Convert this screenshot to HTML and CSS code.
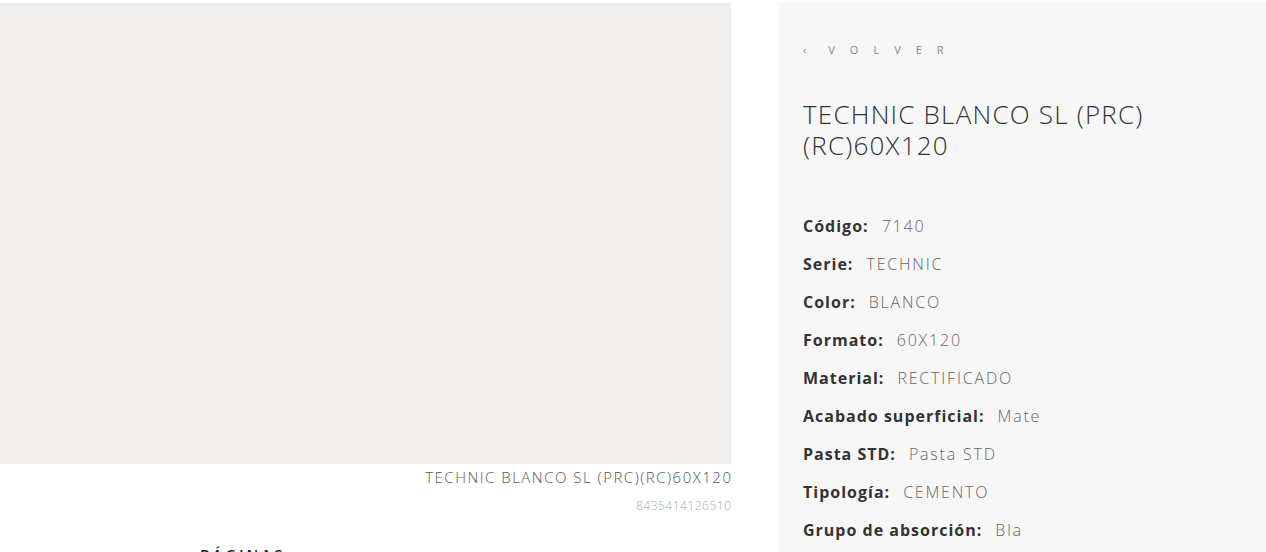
FILE: index.html
```html
<!DOCTYPE html>
<html lang="es">
<head>
<meta charset="utf-8">
<title>TECHNIC BLANCO SL (PRC)(RC)60X120</title>
<link rel="stylesheet" href="styles.css">
</head>
<body>
<main class="product">
  <section class="media">
    <div class="photo"></div>
    <div class="caption">
      <p class="caption-name">TECHNIC BLANCO SL (PRC)(RC)60X120</p>
      <p class="caption-ean">8435414126510</p>
    </div>
    <h2 class="pages">PÁGINAS</h2>
  </section>
  <aside class="info">
    <a class="back" href="#"><span class="back-arrow">‹</span>VOLVER</a>
    <h1 class="title">TECHNIC BLANCO SL (PRC)(RC)60X120</h1>
    <ul class="specs">
      <li><b>Código:</b><span>7140</span></li>
      <li><b>Serie:</b><span>TECHNIC</span></li>
      <li><b>Color:</b><span>BLANCO</span></li>
      <li><b>Formato:</b><span>60X120</span></li>
      <li><b>Material:</b><span>RECTIFICADO</span></li>
      <li><b>Acabado superficial:</b><span>Mate</span></li>
      <li><b>Pasta STD:</b><span>Pasta STD</span></li>
      <li><b>Tipología:</b><span>CEMENTO</span></li>
      <li><b>Grupo de absorción:</b><span>Bla</span></li>
    </ul>
  </aside>
</main>
</body>
</html>
```
FILE: styles.css
```css
html, body {
  margin: 0;
  padding: 0;
  background: #ffffff;
  font-family: "Open Sans", "Noto Sans", Arial, sans-serif;
  color: #333;
  overflow: hidden;
}
.product {
  display: grid;
  grid-template-columns: 731px 487px;
  column-gap: 48px;
  padding-top: 3px;
  height: 549px;
  align-items: start;
}
.media {
  display: flex;
  flex-direction: column;
}
.photo {
  height: 461px;
  background: #efeeec;
}
.caption {
  text-align: right;
}
.caption-name {
  margin: 3px -1.5px 0 0;
  font-size: 15px;
  font-weight: 300;
  color: #555;
  line-height: 20px;
  letter-spacing: 1.5px;
}
.caption-ean {
  margin: 11px -0.5px 0 0;
  font-size: 12px;
  font-weight: 300;
  color: #aaa;
  line-height: 16px;
  letter-spacing: 0.5px;
}
.pages {
  margin: 30px 0 0 200px;
  font-size: 15px;
  font-weight: 600;
  letter-spacing: 3px;
  color: #222;
  line-height: 20px;
}
.info {
  background: #f7f7f7;
  height: 549px;
  padding: 37px 24px 0;
  box-sizing: border-box;
  display: flex;
  flex-direction: column;
  align-items: flex-start;
}
.back {
  font-size: 11px;
  letter-spacing: 15px;
  color: #888;
  text-decoration: none;
  line-height: 20px;
  font-weight: 400;
}
.back-arrow {
  letter-spacing: 0;
  margin-right: 22px;
}
.title {
  margin: 39px 0 0;
  font-size: 26px;
  font-weight: 300;
  line-height: 31px;
  color: #333;
  letter-spacing: 1.2px;
  max-width: 400px;
}
.specs {
  list-style: none;
  margin: 54px 0 0;
  padding: 0;
  display: flex;
  flex-direction: column;
}
.specs li {
  display: flex;
  gap: 13px;
  align-items: baseline;
  height: 38px;
  line-height: 22px;
  font-size: 16px;
}
.specs b {
  font-weight: 700;
  color: #333;
  letter-spacing: 1px;
}
.specs span {
  font-weight: 300;
  color: #666;
  letter-spacing: 1.8px;
}
```
